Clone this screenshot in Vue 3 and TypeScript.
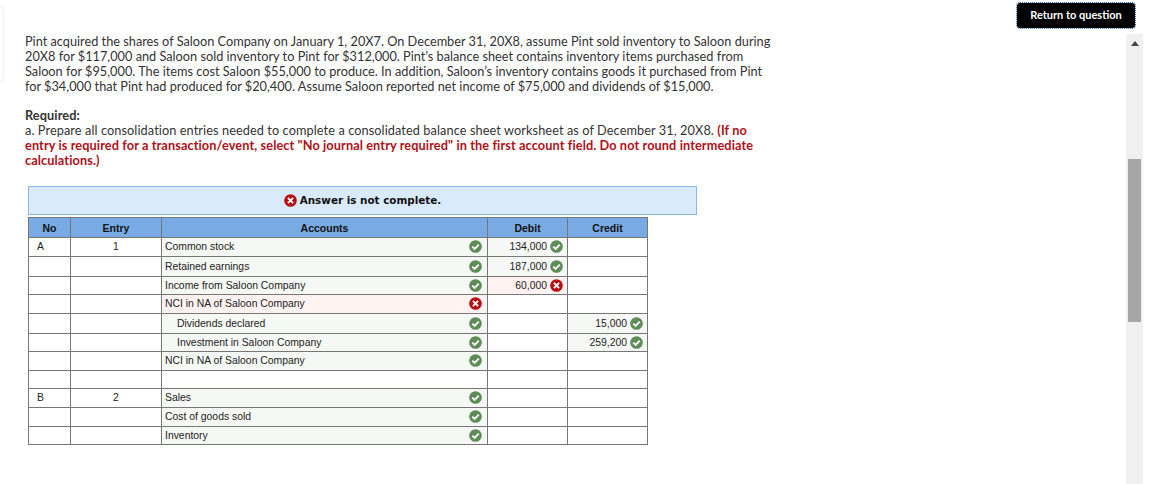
<script setup lang="ts">
type Mark = 'ok' | 'bad' | ''

type Row = {
  no?: string
  entry?: string
  account?: string
  indent?: boolean
  accountMark?: Mark
  debit?: string
  debitMark?: Mark
  credit?: string
  creditMark?: Mark
  height: number
}

const rows: Row[] = [
  { no: 'A', entry: '1', account: 'Common stock', accountMark: 'ok', debit: '134,000', debitMark: 'ok', height: 19 },
  { account: 'Retained earnings', accountMark: 'ok', debit: '187,000', debitMark: 'ok', height: 20 },
  { account: 'Income from Saloon Company', accountMark: 'ok', debit: '60,000', debitMark: 'bad', height: 18 },
  { account: 'NCI in NA of Saloon Company', accountMark: 'bad', height: 19 },
  { account: 'Dividends declared', indent: true, accountMark: 'ok', credit: '15,000', creditMark: 'ok', height: 20 },
  { account: 'Investment in Saloon Company', indent: true, accountMark: 'ok', credit: '259,200', creditMark: 'ok', height: 18 },
  { account: 'NCI in NA of Saloon Company', accountMark: 'ok', height: 19 },
  { height: 18 },
  { no: 'B', entry: '2', account: 'Sales', accountMark: 'ok', height: 19 },
  { account: 'Cost of goods sold', accountMark: 'ok', height: 19 },
  { account: 'Inventory', accountMark: 'ok', height: 18 },
]
</script>

<template>
  <div class="page">
    <span class="edgeBox"></span>
    <button class="returnBtn" type="button">Return to question</button>

    <div class="scrollbar">
      <span class="arrowUp"></span>
      <span class="thumb"></span>
    </div>

    <div class="question">
      <p class="intro">
        Pint acquired the shares of Saloon Company on January 1, 20X7. On December 31, 20X8, assume Pint sold inventory to Saloon during<br />
        20X8 for $117,000 and Saloon sold inventory to Pint for $312,000. Pint’s balance sheet contains inventory items purchased from<br />
        Saloon for $95,000. The items cost Saloon $55,000 to produce. In addition, Saloon’s inventory contains goods it purchased from Pint<br />
        for $34,000 that Pint had produced for $20,400. Assume Saloon reported net income of $75,000 and dividends of $15,000.
      </p>
      <p class="required">
        <strong>Required:</strong><br />
        <span class="task">a. Prepare all consolidation entries needed to complete a consolidated balance sheet worksheet as of December 31, 20X8. </span><strong class="warn">(If no<br />
        entry is required for a transaction/event, select "No journal entry required" in the first account field. Do not round intermediate<br />
        calculations.)</strong>
      </p>
    </div>

    <div class="banner">
      <svg class="icon" viewBox="0 0 14 14" width="13" height="13">
        <circle cx="7" cy="7" r="6.8" fill="#b90f14" />
        <path d="M4.2 4.2l5.6 5.6M9.8 4.2l-5.6 5.6" stroke="#fff" stroke-width="2" fill="none" />
      </svg>
      <span>Answer is not complete.</span>
    </div>

    <table class="sheet">
      <colgroup>
        <col class="colNo" />
        <col class="colEntry" />
        <col class="colAccount" />
        <col class="colAmount" />
        <col class="colAmount" />
      </colgroup>
      <thead>
        <tr>
          <th>No</th>
          <th>Entry</th>
          <th>Accounts</th>
          <th>Debit</th>
          <th>Credit</th>
        </tr>
      </thead>
      <tbody>
        <tr v-for="(row, i) in rows" :key="i" :style="{ height: row.height + 'px' }">
          <td class="cellNo">{{ row.no }}</td>
          <td class="cellEntry">{{ row.entry }}</td>
          <td :class="['cellAccount', row.accountMark]">
            <div class="cellBody">
              <span :class="{ indent: row.indent }">{{ row.account }}</span>
              <svg v-if="row.accountMark === 'ok'" class="icon" viewBox="0 0 14 14" width="13" height="13">
                <circle cx="7" cy="7" r="6.8" fill="#5e8c57" />
                <path d="M3.6 7.2l2.4 2.3 4.5-4.6" stroke="#fff" stroke-width="2" fill="none" />
              </svg>
              <svg v-else-if="row.accountMark === 'bad'" class="icon" viewBox="0 0 14 14" width="13" height="13">
                <circle cx="7" cy="7" r="6.8" fill="#b90f14" />
                <path d="M4.2 4.2l5.6 5.6M9.8 4.2l-5.6 5.6" stroke="#fff" stroke-width="2" fill="none" />
              </svg>
            </div>
          </td>
          <td :class="['cellAmount', row.debitMark]">
            <div v-if="row.debit" class="amount">
              <span>{{ row.debit }}</span>
              <svg v-if="row.debitMark === 'ok'" class="icon" viewBox="0 0 14 14" width="13" height="13">
                <circle cx="7" cy="7" r="6.8" fill="#5e8c57" />
                <path d="M3.6 7.2l2.4 2.3 4.5-4.6" stroke="#fff" stroke-width="2" fill="none" />
              </svg>
              <svg v-else class="icon" viewBox="0 0 14 14" width="13" height="13">
                <circle cx="7" cy="7" r="6.8" fill="#b90f14" />
                <path d="M4.2 4.2l5.6 5.6M9.8 4.2l-5.6 5.6" stroke="#fff" stroke-width="2" fill="none" />
              </svg>
            </div>
          </td>
          <td :class="['cellAmount', row.creditMark]">
            <div v-if="row.credit" class="amount">
              <span>{{ row.credit }}</span>
              <svg class="icon" viewBox="0 0 14 14" width="13" height="13">
                <circle cx="7" cy="7" r="6.8" fill="#5e8c57" />
                <path d="M3.6 7.2l2.4 2.3 4.5-4.6" stroke="#fff" stroke-width="2" fill="none" />
              </svg>
            </div>
          </td>
        </tr>
      </tbody>
    </table>
  </div>
</template>

<style>
html,
body {
  margin: 0;
  background: #fff;
  overflow: hidden;
}
</style>

<style scoped>
.page {
  position: relative;
  width: 1157px;
  height: 484px;
  box-sizing: border-box;
  padding: 34px 0 0 25px;
  overflow: hidden;
  font-family: "Lato", "Liberation Sans", sans-serif;
  color: #333;
}

.edgeBox {
  position: absolute;
  top: 7px;
  left: -8px;
  width: 10px;
  height: 72px;
  border: 1px solid #eee;
  border-radius: 3px;
}

.returnBtn {
  position: absolute;
  top: 3px;
  left: 1017px;
  width: 118px;
  height: 25px;
  padding: 0 0 2px;
  border: 0;
  border-radius: 3px;
  outline: 1px dotted #2a6aa5;
  background: #000;
  color: #fff;
  font-family: "Lato", "Liberation Sans", sans-serif;
  font-size: 11px;
  font-weight: 700;
}

.scrollbar {
  position: absolute;
  top: 34px;
  left: 1126px;
  bottom: 0;
  width: 17px;
  background: #f0f0f0;
}

.arrowUp {
  position: absolute;
  top: 7px;
  left: 5px;
  width: 0;
  height: 0;
  border-left: 4px solid transparent;
  border-right: 4px solid transparent;
  border-bottom: 5px solid #444;
}

.thumb {
  position: absolute;
  top: 125px;
  left: 2px;
  width: 13px;
  height: 163px;
  background: #a6a6a6;
}

.question {
  font-size: 12.74px;
  line-height: 15px;
  font-variant-ligatures: none;
}

.question p {
  margin: 0;
}

.question .required {
  margin-top: 14px;
}

.question strong {
  letter-spacing: 0.1px;
}

.task {
  letter-spacing: 0.085px;
}

.warn {
  color: #b10f16;
}

.banner {
  display: flex;
  align-items: center;
  justify-content: center;
  gap: 3px;
  box-sizing: border-box;
  width: 669px;
  height: 29px;
  margin: 18px 0 0 3px;
  padding-bottom: 1px;
  border: 1px solid #8cb8e4;
  background: #d9eafa;
  color: #111;
  font-family: "DejaVu Sans", sans-serif;
  font-size: 10.4px;
  font-weight: 700;
}

.sheet {
  width: 620px;
  margin: 2px 0 0 3px;
  border-collapse: collapse;
  table-layout: fixed;
  font-family: "Liberation Sans", sans-serif;
  font-size: 10.4px;
  color: #222;
}

.colNo {
  width: 42px;
}

.colEntry {
  width: 91px;
}

.colAccount {
  width: 326px;
}

.colAmount {
  width: 80px;
}

.sheet th,
.sheet td {
  border: 1px solid #777;
}

.sheet th {
  height: 19px;
  padding: 0;
  background: #78abe4;
  color: #111;
  font-size: 10.5px;
  font-weight: 700;
}

.sheet td {
  padding: 0 0 1px;
}

.sheet td.cellNo {
  padding-left: 8px;
}

.cellEntry {
  text-align: center;
}

.sheet td.cellAccount {
  padding: 0 5px 1px 3px;
}

.cellAccount.ok,
.cellAmount.ok {
  background: #f6f8f5;
}

.cellAccount.bad,
.cellAmount.bad {
  background: #fff2f1;
}

.cellBody,
.amount {
  display: flex;
  align-items: center;
}

.cellBody {
  justify-content: space-between;
}

.indent {
  padding-left: 12px;
}

.amount {
  justify-content: flex-end;
  gap: 3px;
  padding-right: 4px;
}

.icon {
  flex: none;
}
</style>
